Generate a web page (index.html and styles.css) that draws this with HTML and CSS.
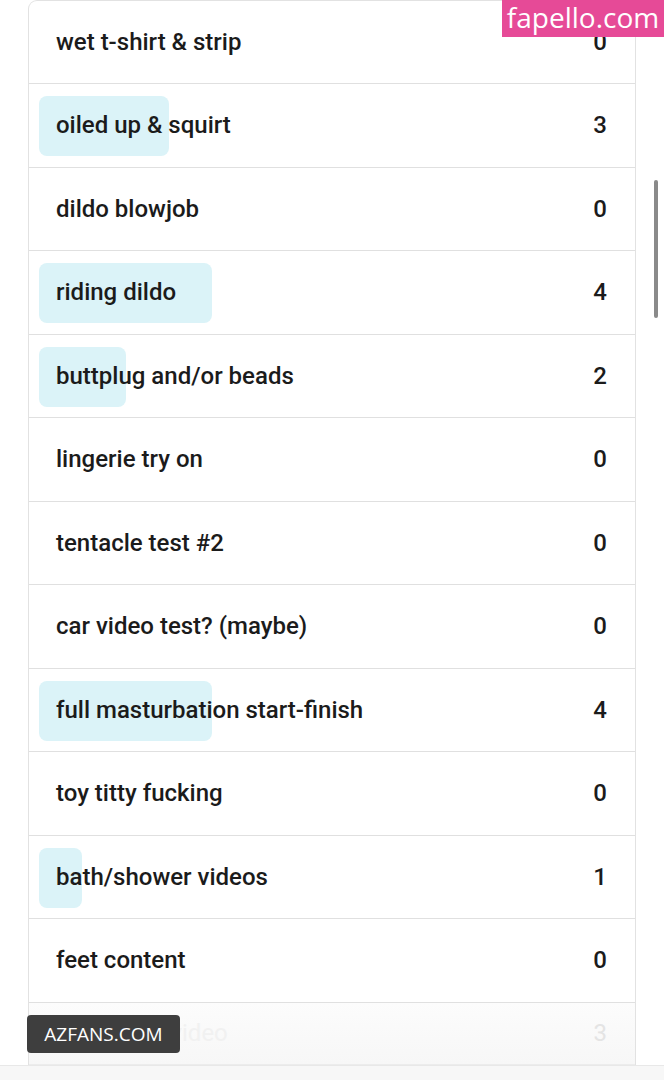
FILE: index.html
```html
<!DOCTYPE html>
<html lang="en">
<head>
    <meta charset="UTF-8">
    <title>poll results</title>
    <link rel="stylesheet" href="styles.css">
</head>
<body>
<div class="page">
    <!-- 投票结果列表 -->
    <ul class="poll">
        <li class="row"><span class="label">wet t-shirt &amp; strip</span><span class="count">0</span></li>
        <li class="row"><i class="bar" style="width:130px"></i><span class="label">oiled up &amp; squirt</span><span class="count">3</span></li>
        <li class="row"><span class="label">dildo blowjob</span><span class="count">0</span></li>
        <li class="row"><i class="bar" style="width:173px"></i><span class="label">riding dildo</span><span class="count">4</span></li>
        <li class="row"><i class="bar" style="width:87px"></i><span class="label">buttplug and/or beads</span><span class="count">2</span></li>
        <li class="row"><span class="label">lingerie try on</span><span class="count">0</span></li>
        <li class="row"><span class="label">tentacle test #2</span><span class="count">0</span></li>
        <li class="row"><span class="label">car video test? (maybe)</span><span class="count">0</span></li>
        <li class="row"><i class="bar" style="width:173px"></i><span class="label">full masturbation start-finish</span><span class="count">4</span></li>
        <li class="row"><span class="label">toy titty fucking</span><span class="count">0</span></li>
        <li class="row"><i class="bar" style="width:43px"></i><span class="label">bath/shower videos</span><span class="count">1</span></li>
        <li class="row"><span class="label">feet content</span><span class="count">0</span></li>
        <li class="row faded"><span class="label">squirt test video</span><span class="count">3</span></li>
    </ul>
    <div class="sheet"></div>

    <!-- 滚动条 -->
    <div class="scrollbar"></div>

    <!-- 水印 -->
    <div class="mark-top">fapello.com</div>
    <div class="mark-bottom">AZFANS.COM</div>
</div>
</body>
</html>
```

FILE: styles.css
```css
*{
    margin: 0;
    padding: 0;
    box-sizing: border-box;
}
body{
    background: #fff;
    font-family: Roboto, "Liberation Sans", sans-serif;
    color: #1b1b1b;
}
.page{
    width: 664px;
    height: 1080px;
    position: relative;
    overflow: hidden;
}

/*列表*/
.poll{
    list-style: none;
    width: 608px;
    margin-left: 28px;
    border: 1px solid #e2e2e2;
    border-bottom: none;
    border-radius: 9px 9px 0 0;
}
.poll .row{
    height: 83.5px;
    padding: 0 28px 0 27px;
    border-bottom: 1px solid #e0e0e0;
    display: flex;
    align-items: center;
    justify-content: space-between;
    position: relative;
    font-size: 24px;
    font-weight: 500;
}
.poll .row:first-child{
    height: 83px;
}
.poll .row .bar{
    position: absolute;
    left: 10px;
    top: 12px;
    height: 60px;
    background: #dbf3f8;
    border-radius: 8px;
}
.poll .row .label,
.poll .row .count{
    position: relative;
}
.poll .row.faded{
    height: 62px;
    color: #f1f1f1;
    background: linear-gradient(#fcfcfc, #f7f7f7);
    border-bottom-color: #ececec;
    font-weight: 400;
}
.poll .row.faded .count{
    color: #e4e4e4;
}

/*底部遮罩*/
.sheet{
    height: 20px;
    background: #f7f7f7;
    border-top: 1px solid #e8e8e8;
    margin-left: -28px;
}

.scrollbar{
    position: absolute;
    left: 654px;
    top: 180px;
    width: 4px;
    height: 138px;
    border-radius: 2px;
    background: #8a8a8a;
}

/*水印*/
.mark-top{
    position: absolute;
    right: 0;
    top: 0;
    width: 162px;
    height: 37px;
    background: #e64a97;
    color: #fff;
    font-family: "Open Sans", sans-serif;
    font-size: 28px;
    line-height: 34px;
    text-align: center;
}
.mark-bottom{
    position: absolute;
    left: 27px;
    top: 1015px;
    width: 153px;
    height: 38px;
    background: #3e3e3e;
    border-radius: 4px;
    color: #fff;
    font-family: "Open Sans", sans-serif;
    font-size: 19px;
    line-height: 38px;
    text-align: center;
}
```
